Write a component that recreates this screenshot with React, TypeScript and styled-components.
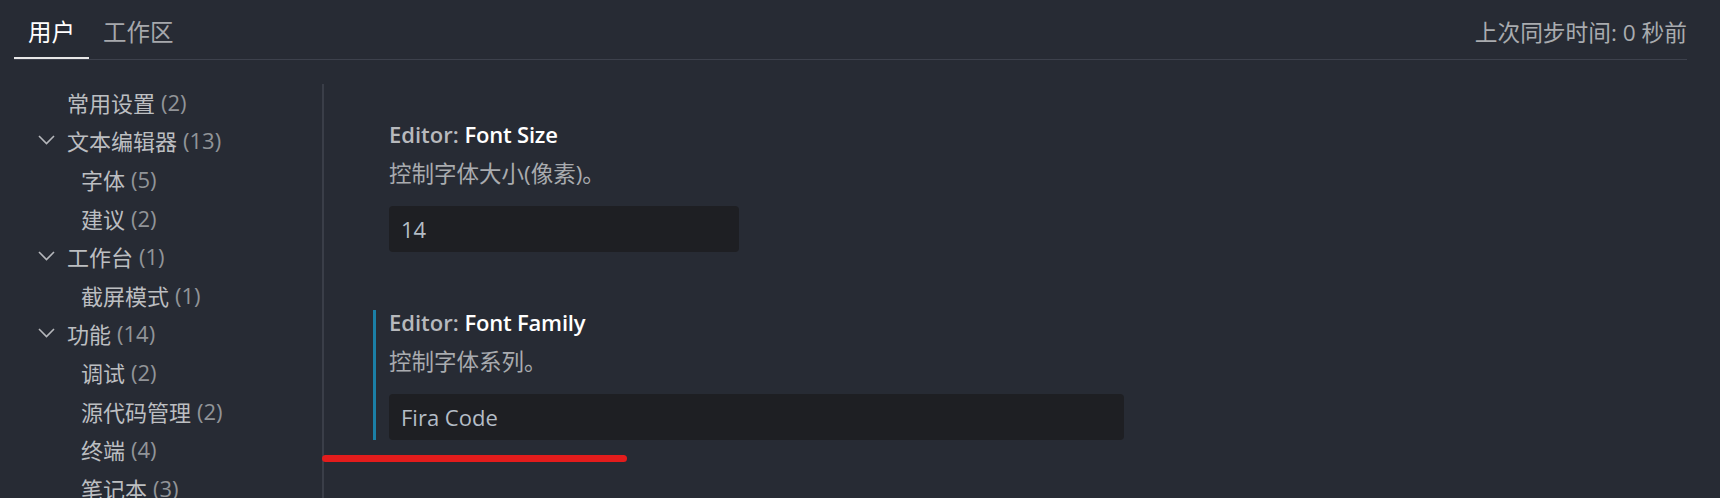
import React from "react";
import styled, { createGlobalStyle } from "styled-components";

const Global = createGlobalStyle`
  html, body {
    margin: 0;
    padding: 0;
    background: #272b34;
    overflow: hidden;
  }
  body {
    font-family: "Open Sans", "Noto Sans CJK SC", sans-serif;
  }
`;

const Page = styled.div`
  width: 1720px;
  height: 498px;
  background: #272b34;
  overflow: hidden;
  display: flex;
  flex-direction: column;
`;

const Header = styled.header`
  display: flex;
  align-items: stretch;
  justify-content: space-between;
  height: 59px;
  margin: 0 33px 0 14px;
  border-bottom: 1px solid #3d414c;
  flex: none;
`;

const Tabs = styled.nav`
  display: flex;
  align-items: stretch;
`;

const Tab = styled.div<{ $active?: boolean }>`
  display: flex;
  align-items: center;
  padding: 3px 14px 0;
  font-size: 23.5px;
  color: ${(p) => (p.$active ? "#ffffff" : "#a6a8ac")};
  box-shadow: ${(p) => (p.$active ? "inset 0 -2px 0 #e8e8e8" : "none")};
`;

const SyncStatus = styled.div`
  display: flex;
  align-items: center;
  padding-top: 4px;
  font-size: 22.7px;
  color: #a9abaf;
`;

const Body = styled.div`
  display: flex;
  flex: 1;
  margin-top: 24px;
  min-height: 0;
`;

const Toc = styled.aside`
  width: 324px;
  flex: none;
  border-right: 2px solid #3a3e48;
  box-sizing: border-box;
`;

const TocRow = styled.div<{ $indent: number }>`
  display: flex;
  align-items: center;
  height: 38.6px;
  box-sizing: border-box;
  padding-left: ${(p) => p.$indent}px;
  padding-bottom: 3px;
  font-size: 22px;
  white-space: nowrap;
`;

const Chevron = styled.svg`
  width: 17px;
  height: 10px;
  margin-right: 12px;
  flex: none;
`;

const TocLabel = styled.span`
  color: #bcbec1;
`;

const TocCount = styled.span`
  color: #919498;
  margin-left: 6px;
`;

const Main = styled.main`
  flex: 1;
  padding-top: 38px;
  display: flex;
  flex-direction: column;
`;

const SettingsList = styled.div`
  display: flex;
  flex-direction: column;
  gap: 58px;
  margin-left: 49px;
`;

const Setting = styled.section<{ $focused?: boolean }>`
  border-left: 3px solid ${(p) => (p.$focused ? "#1b7fa6" : "transparent")};
  padding-left: 13px;
  display: flex;
  flex-direction: column;
`;

const Title = styled.div`
  font-size: 22px;
  line-height: 24px;
  font-weight: 600;
  color: #b7b9bd;
  white-space: nowrap;
`;

const TitleKey = styled.span`
  color: #ffffff;
  letter-spacing: -0.2px;
`;

const Description = styled.div`
  margin-top: 13px;
  font-size: 22.5px;
  line-height: 30px;
  color: #a9abaf;
`;

const Input = styled.div<{ $width: number }>`
  margin-top: 17px;
  width: ${(p) => p.$width}px;
  height: 46px;
  box-sizing: border-box;
  background: #1e1f23;
  border-radius: 4px;
  display: flex;
  align-items: center;
  padding-left: 12px;
  font-size: 22px;
  color: #b4bcc6;
`;

const Annotation = styled.div`
  margin-top: 15px;
  margin-left: -2px;
  width: 305px;
  height: 7px;
  border-radius: 4px;
  background: #e31c1c;
`;

type TocItem = { label: string; count: number; level: 1 | 2; expandable?: boolean };

const tocItems: TocItem[] = [
  { label: "常用设置", count: 2, level: 1 },
  { label: "文本编辑器", count: 13, level: 1, expandable: true },
  { label: "字体", count: 5, level: 2 },
  { label: "建议", count: 2, level: 2 },
  { label: "工作台", count: 1, level: 1, expandable: true },
  { label: "截屏模式", count: 1, level: 2 },
  { label: "功能", count: 14, level: 1, expandable: true },
  { label: "调试", count: 2, level: 2 },
  { label: "源代码管理", count: 2, level: 2 },
  { label: "终端", count: 4, level: 2 },
  { label: "笔记本", count: 3, level: 2 },
];

const ChevronDown = () => (
  <Chevron viewBox="0 0 17 10" fill="none">
    <polyline points="1,1 8.5,8.5 16,1" stroke="#b5b7bb" strokeWidth="1.6" />
  </Chevron>
);

export default function App() {
  return (
    <>
      <Global />
      <Page>
        <Header>
          <Tabs>
            <Tab $active>用户</Tab>
            <Tab>工作区</Tab>
          </Tabs>
          <SyncStatus>上次同步时间: 0 秒前</SyncStatus>
        </Header>
        <Body>
          <Toc>
            {tocItems.map((it) => (
              <TocRow key={it.label} $indent={it.level === 2 ? 81 : it.expandable ? 38 : 67}>
                {it.expandable && <ChevronDown />}
                <TocLabel>{it.label}</TocLabel>
                <TocCount>({it.count})</TocCount>
              </TocRow>
            ))}
          </Toc>
          <Main>
            <SettingsList>
              <Setting>
                <Title>
                  Editor: <TitleKey>Font Size</TitleKey>
                </Title>
                <Description>控制字体大小(像素)。</Description>
                <Input $width={350}>14</Input>
              </Setting>
              <Setting $focused>
                <Title>
                  Editor: <TitleKey>Font Family</TitleKey>
                </Title>
                <Description>控制字体系列。</Description>
                <Input $width={735}>Fira Code</Input>
              </Setting>
            </SettingsList>
            <Annotation />
          </Main>
        </Body>
      </Page>
    </>
  );
}
